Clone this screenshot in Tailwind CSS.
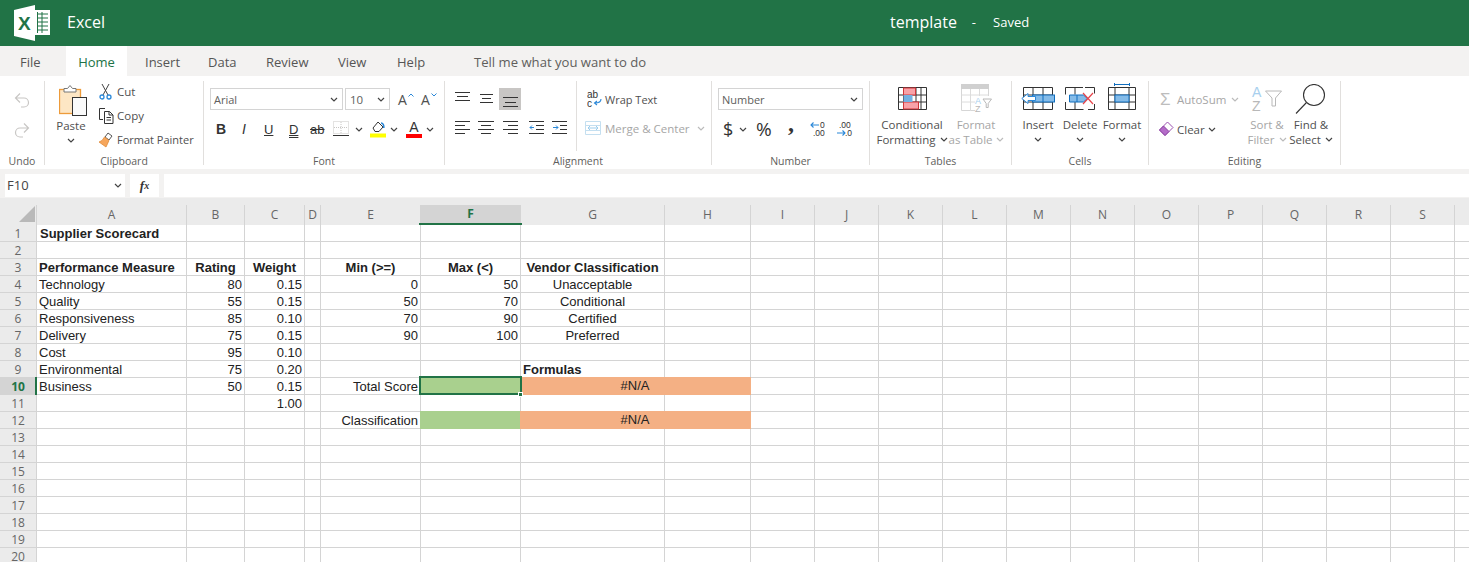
<!DOCTYPE html>
<html lang="en">
<head>
<meta charset="utf-8">
<title>Excel - template</title>
<script src="https://cdn.jsdelivr.net/npm/@tailwindcss/browser@4"></script>
</head>
<body class="w-[1469px] h-[562px] overflow-hidden bg-white font-['Open_Sans',sans-serif] text-[#444]">

<!-- Title bar -->
<header class="h-[46px] bg-[#217346] text-white flex items-center relative">
  <svg class="ml-[13px] w-[38px] h-[38px] shrink-0" viewBox="0 0 38 38">
    <polygon points="1,6 22,1 22,37 1,32" fill="#fff"/>
    <text x="5" y="26" font-family="Liberation Sans" font-weight="700" font-size="19" fill="#217346">X</text>
    <rect x="22" y="6" width="15" height="25" fill="#fff"/>
    <path d="M24 10h11M24 14h11M24 18h11M24 22h11M24 26h11M29 8v21M24.500 8v21" stroke="#217346" stroke-width="1" fill="none"/>
  </svg>
  <span class="ml-[16px] text-[16px] mb-[2px]">Excel</span>
  <div class="ml-[785px] flex items-center">
    <span class="text-[16px] mb-[2px]">template</span>
    <span class="ml-[15px] text-[13px]">-</span>
    <span class="ml-[17px] text-[13px]">Saved</span>
  </div>
</header>

<!-- Tabs -->
<nav class="h-[30px] bg-[#f3f2f1] flex items-center text-[13px] text-[#555]">
  <span class="w-[66px] pl-[20px] pt-[3px]">File</span>
  <span class="w-[61px] h-full bg-white text-[#217346] pt-[3px] flex items-center justify-center">Home</span>
  <span class="w-[81px] pl-[18px] pt-[3px]">Insert</span>
  <span class="w-[58px] pt-[3px]">Data</span>
  <span class="w-[72px] pt-[3px]">Review</span>
  <span class="w-[59px] pt-[3px]">View</span>
  <span class="w-[77px] pt-[3px]">Help</span>
  <span class="pt-[3px] text-[13.100px] text-[#605e5c]">Tell me what you want to do</span>
</nav>

<!-- Ribbon -->
<section class="h-[93px] pt-[5px] bg-white flex text-[11.500px] leading-[15px] text-[#505050]">

  <!-- Undo -->
  <div class="w-[45px] h-[84px] border-r border-[#e1dfdd] flex flex-col">
    <div class="h-[72px] flex flex-col items-center pt-[11px] gap-[14px]">
      <svg class="w-[16px] h-[16px]" viewBox="0 0 16 16" fill="none" stroke="#c8c6c4" stroke-width="1.200"><path d="M6 1.500L1.500 6 6 10.500M1.500 6H10a4.500 4.500 0 0 1 0 9H7"/></svg>
      <svg class="w-[16px] h-[16px]" viewBox="0 0 16 16" fill="none" stroke="#c8c6c4" stroke-width="1.200"><path d="M10 1.500L14.500 6 10 10.500M14.500 6H6a4.500 4.500 0 0 0 0 9h3"/></svg>
    </div>
    <div class="h-[12px] leading-[16px] text-center text-[10.500px] text-[#605e5c]">Undo</div>
  </div>

  <!-- Clipboard -->
  <div class="w-[159px] h-[84px] border-r border-[#e1dfdd] flex flex-col">
    <div class="h-[72px] flex">
      <div class="ml-[6px] w-[40px] flex flex-col items-center">
        <svg class="mt-[3px] w-[28px] h-[32px] ml-[4px]" viewBox="0 0 28 32">
          <rect x=".500" y="5.500" width="21" height="24" fill="#fde6c4" stroke="#ed9b3a" stroke-width="1.300"/>
          <path d="M5 8V4.500h3.500L11 1.500l2.500 3H17V8z" fill="#fff" stroke="#777"/>
          <rect x="13.500" y="13.500" width="14" height="18" fill="#fafafa" stroke="#333"/>
        </svg>
        <span class="mt-[2px]">Paste</span>
        <svg class="mt-[5px] w-[8px] h-[5px]" viewBox="0 0 8 5" fill="none" stroke="#444" stroke-width="1.200"><path d="M1 1l3 3 3-3"/></svg>
      </div>
      <div class="ml-[7px] flex flex-col pt-[2px]">
        <div class="h-[17px] flex items-center">
          <svg class="w-[16px] h-[17px]" viewBox="0 0 16 17" fill="none"><path d="M4 1l6 11M11 1L5 12" stroke="#444"/><circle cx="4" cy="14" r="2" stroke="#2b88d8" stroke-width="1.300"/><circle cx="11" cy="14" r="2" stroke="#2b88d8" stroke-width="1.300"/></svg>
          <span class="ml-[3px]">Cut</span>
        </div>
        <div class="h-[17px] mt-[7px] flex items-center">
          <svg class="w-[18px] h-[16px]" viewBox="0 0 18 16" fill="none" stroke="#333"><path d="M7 .500H1.500v11H5"/><path d="M6.500 3.500h5l3.500 3.500v8.500H6.500zM11 3.500V7h4M8.500 9.500h4.500M8.500 12h4.500"/></svg>
          <span class="ml-[1px]">Copy</span>
        </div>
        <div class="h-[17px] mt-[7px] flex items-center">
          <svg class="w-[16px] h-[16px]" viewBox="0 0 16 16"><path d="M10 1l4 3-3 4-4-3z" fill="#fff" stroke="#555"/><path d="M6.500 5l4.500 3.500-3 6.500-7-5 3-1.500z" fill="#f6a65c" stroke="#e08b3a" stroke-width=".800"/></svg>
          <span class="ml-[3px] text-[11px] whitespace-nowrap">Format Painter</span>
        </div>
      </div>
    </div>
    <div class="h-[12px] leading-[16px] text-center text-[10.500px] text-[#605e5c]">Clipboard</div>
  </div>

  <!-- Font -->
  <div class="w-[241px] h-[84px] border-r border-[#e1dfdd] flex flex-col">
    <div class="h-[72px] pl-[6px] pt-[7px]">
      <div class="flex items-center h-[22px]">
        <div class="w-[133px] h-[22px] border border-[#d4d4d4] flex items-center justify-between pl-[3px] pr-[4px] text-[11px] text-[#605e5c]">
          <span>Arial</span>
          <svg class="w-[8px] h-[5px]" viewBox="0 0 8 5" fill="none" stroke="#444" stroke-width="1.200"><path d="M1 1l3 3 3-3"/></svg>
        </div>
        <div class="ml-[2px] w-[45px] h-[22px] border border-[#d4d4d4] flex items-center justify-between pl-[4px] pr-[4px] text-[#605e5c]">
          <span>10</span>
          <svg class="w-[8px] h-[5px]" viewBox="0 0 8 5" fill="none" stroke="#444" stroke-width="1.200"><path d="M1 1l3 3 3-3"/></svg>
        </div>
        <span class="ml-[8px] relative text-[14px] w-[23px]">A<svg class="absolute left-[10px] top-[1px] w-[6px] h-[4px]" viewBox="0 0 6 4" fill="none" stroke="#2b88d8"><path d="M.500 3.500L3 1l2.500 2.500"/></svg></span>
        <span class="relative text-[14px]">A<svg class="absolute left-[10px] top-[1px] w-[6px] h-[4px]" viewBox="0 0 6 4" fill="none" stroke="#2b88d8"><path d="M.500.500L3 3l2.500-2.500"/></svg></span>
      </div>
      <div class="flex items-center h-[24px] mt-[7px] text-[#333]">
        <span class="ml-[6px] w-[22px] text-[14px] font-bold font-['Liberation_Sans']">B</span>
        <span class="ml-[4px] w-[22px] text-[14px] italic font-['Liberation_Sans']">I</span>
        <span class="w-[25px] text-[13px] underline font-['Liberation_Sans']">U</span>
        <span class="w-[21px] text-[13px] underline decoration-double font-['Liberation_Sans']">D</span>
        <span class="w-[23px] text-[13px] line-through font-['Liberation_Sans']">ab</span>
        <svg class="w-[16px] h-[16px]" viewBox="0 0 16 16" fill="none"><path d="M.500.500h15v12H.500zM8 1v11M1 6.500h14" stroke="#c8c6c4" stroke-dasharray="1 1"/><path d="M0 14.500h16" stroke="#333"/></svg>
        <svg class="ml-[6px] w-[8px] h-[5px]" viewBox="0 0 8 5" fill="none" stroke="#444" stroke-width="1.200"><path d="M1 1l3 3 3-3"/></svg>
        <svg class="ml-[7px] w-[16px] h-[18px]" viewBox="0 0 16 18"><path d="M3 8l5-6 5 5-4 4.500H5z" fill="#fff" stroke="#333"/><path d="M11 3c2 0 3 2 2.800 5" fill="none" stroke="#2b88d8" stroke-width="1.600"/><rect y="13.500" width="16" height="4" fill="#ffff00"/></svg>
        <svg class="ml-[4px] w-[8px] h-[5px]" viewBox="0 0 8 5" fill="none" stroke="#444" stroke-width="1.200"><path d="M1 1l3 3 3-3"/></svg>
        <span class="ml-[8px] w-[16px] h-[18px] relative text-center text-[14px] leading-[15px] font-['Liberation_Sans']">A<span class="absolute left-0 bottom-0 w-[16px] h-[4px] bg-[#ff0000]"></span></span>
        <svg class="ml-[4px] w-[8px] h-[5px]" viewBox="0 0 8 5" fill="none" stroke="#444" stroke-width="1.200"><path d="M1 1l3 3 3-3"/></svg>
      </div>
    </div>
    <div class="h-[12px] leading-[16px] text-center text-[10.500px] text-[#605e5c]">Font</div>
  </div>

  <!-- Alignment -->
  <div class="w-[267px] h-[84px] border-r border-[#e1dfdd] flex flex-col">
    <div class="h-[70px] flex">
      <div class="w-[132px] border-r border-[#e1dfdd] pt-[7px] pl-[10px]">
        <div class="flex items-center h-[22px] text-[#333]">
          <svg class="w-[15px] h-[22px]" viewBox="0 0 15 22" stroke="#333" fill="none"><path d="M0 4.500h15M2 8.500h11M0 12.500h15"/></svg>
          <svg class="ml-[9px] w-[15px] h-[22px]" viewBox="0 0 15 22" stroke="#333" fill="none"><path d="M1 6.500h13M3 10.500h9M1 14.500h13"/></svg>
          <span class="ml-[5px] w-[22px] h-[22px] bg-[#c8c6c4] flex items-center justify-center">
            <svg class="w-[15px] h-[22px]" viewBox="0 0 15 22" stroke="#333" fill="none"><path d="M0 9.500h15M2 14.500h11M0 18.500h15"/></svg>
          </span>
        </div>
        <div class="flex items-center h-[14px] mt-[11px]">
          <svg class="w-[15px] h-[14px]" viewBox="0 0 15 14" stroke="#333" fill="none"><path d="M0 .500h15M0 4.500h10M0 8.500h15M0 12.500h10"/></svg>
          <svg class="ml-[8px] w-[16px] h-[14px]" viewBox="0 0 16 14" stroke="#333" fill="none"><path d="M0 .500h16M3 4.500h10M0 8.500h16M3 12.500h10"/></svg>
          <svg class="ml-[9px] w-[15px] h-[14px]" viewBox="0 0 15 14" stroke="#333" fill="none"><path d="M0 .500h15M5 4.500h10M0 8.500h15M5 12.500h10"/></svg>
          <svg class="ml-[11px] w-[15px] h-[14px]" viewBox="0 0 15 14" fill="none"><path d="M0 .500h15M7 4.500h8M7 8.500h8M0 12.500h15" stroke="#333"/><path d="M5 6.500H1M3 4.500l-2 2 2 2" stroke="#2b88d8"/></svg>
          <svg class="ml-[8px] w-[15px] h-[14px]" viewBox="0 0 15 14" fill="none"><path d="M0 .500h15M8 4.500h7M8 8.500h7M0 12.500h15" stroke="#333"/><path d="M1 6.500h5M4 4.500l2 2-2 2" stroke="#2b88d8"/></svg>
        </div>
      </div>
      <div class="pl-[8px] pt-[8px]">
        <div class="flex items-center h-[20px]">
          <svg class="w-[16px] h-[20px] ml-[2px]" viewBox="0 0 16 20"><text x="0" y="9" font-family="Liberation Sans" font-size="10" fill="#333">ab</text><text x="0" y="18" font-family="Liberation Sans" font-size="10" fill="#333">c</text><path d="M14 10c0 3-2 4-6 4M10 12l-2.500 2 2.500 2" fill="none" stroke="#2b88d8" stroke-width="1.100"/></svg>
          <span class="ml-[2px] text-[11px]">Wrap Text</span>
        </div>
        <div class="flex items-center h-[20px] mt-[9px] text-[#a6a6a6]">
          <svg class="w-[16px] h-[16px]" viewBox="0 0 16 16" fill="none"><path d="M.500 1.500h15v13H.500zM.500 5.500h15M.500 10.500h15" stroke="#c4dff0"/><path d="M3 8h10M5 6L3 8l2 2M11 6l2 2-2 2" stroke="#9dcdec"/></svg>
          <span class="ml-[4px] whitespace-nowrap">Merge &amp; Center</span>
          <svg class="ml-[7px] w-[8px] h-[5px]" viewBox="0 0 8 5" fill="none" stroke="#bbb" stroke-width="1.200"><path d="M1 1l3 3 3-3"/></svg>
        </div>
      </div>
    </div>
    <div class="mt-[2px] h-[12px] leading-[16px] text-center text-[10.500px] text-[#605e5c]">Alignment</div>
  </div>

  <!-- Number -->
  <div class="w-[158px] h-[84px] border-r border-[#e1dfdd] flex flex-col">
    <div class="h-[72px] pl-[6px] pt-[7px]">
      <div class="w-[145px] h-[22px] border border-[#d4d4d4] flex items-center justify-between pl-[3px] pr-[4px] text-[11px] text-[#605e5c]">
        <span>Number</span>
        <svg class="w-[8px] h-[5px]" viewBox="0 0 8 5" fill="none" stroke="#444" stroke-width="1.200"><path d="M1 1l3 3 3-3"/></svg>
      </div>
      <div class="flex items-center h-[24px] mt-[7px] text-[#333]">
        <span class="ml-[5px] w-[11px] text-[18px]">$</span>
        <svg class="ml-[5px] w-[8px] h-[5px]" viewBox="0 0 8 5" fill="none" stroke="#444" stroke-width="1.200"><path d="M1 1l3 3 3-3"/></svg>
        <span class="ml-[9px] w-[17px] text-[19px]">%</span>
        <span class="ml-[15px] w-[22px] h-[24px] text-[24px] leading-[12px] font-bold font-['Liberation_Serif']">,</span>
        <svg class="w-[17px] h-[16px]" viewBox="0 0 17 16"><text x="10" y="7" font-family="Liberation Sans" font-size="8.500" fill="#333">0</text><text x="3" y="15" font-family="Liberation Sans" font-size="8.500" fill="#333">.00</text><path d="M9 4H1M3.500 1.500L1 4l2.500 2.500" fill="none" stroke="#2b88d8" stroke-width="1.100"/></svg>
        <svg class="ml-[9px] w-[17px] h-[16px]" viewBox="0 0 17 16"><text x="3" y="7" font-family="Liberation Sans" font-size="8.500" fill="#333">.00</text><text x="9" y="15" font-family="Liberation Sans" font-size="8.500" fill="#333">.0</text><path d="M1 12h8M6.500 9.500L9 12l-2.500 2.500" fill="none" stroke="#2b88d8" stroke-width="1.100"/></svg>
      </div>
    </div>
    <div class="h-[12px] leading-[16px] text-center text-[10.500px] text-[#605e5c]">Number</div>
  </div>

  <!-- Tables -->
  <div class="w-[142px] h-[84px] border-r border-[#e1dfdd] flex flex-col">
    <div class="h-[72px] flex pl-[5px]">
      <div class="w-[74px] flex flex-col items-center">
        <svg class="mt-[6px] w-[29px] h-[23px]" viewBox="0 0 29 23">
          <path d="M.500.500h28v22H.500zM.500 8h28M.500 15h28M5.500.500v22M18 .500v22M23 .500v22" fill="none" stroke="#333"/>
          <rect x="5.500" y="1" width="12" height="7" fill="#f8a2a8" stroke="#d13438"/>
          <rect x="5.500" y="15" width="15" height="7" fill="#f8a2a8" stroke="#d13438"/>
          <rect x="5.500" y="8" width="9" height="7" fill="#74b1e2"/>
        </svg>
        <div class="mt-[7px] text-center whitespace-nowrap">Conditional</div>
        <div class="text-center whitespace-nowrap flex items-center">Formatting<svg class="ml-[4px] w-[8px] h-[5px]" viewBox="0 0 8 5" fill="none" stroke="#444" stroke-width="1.200"><path d="M1 1l3 3 3-3"/></svg></div>
      </div>
      <div class="w-[54px] flex flex-col items-center text-[#a6a6a6]">
        <svg class="mt-[3px] w-[31px] h-[29px]" viewBox="0 0 31 29">
          <path d="M.500.500h27v26H.500z" fill="none" stroke="#d6d6d6"/>
          <rect x="0" y="0" width="28" height="5" fill="#d0d0d0"/>
          <path d="M.500 11h27M.500 18h27M9.500 5v22M18.500 5v22" stroke="#dcdcdc"/>
          <rect x="14" y="12" width="17" height="17" fill="#fff"/>
          <text x="14" y="20" font-family="Liberation Sans" font-size="9" fill="#a8cfee">A</text>
          <text x="14" y="28" font-family="Liberation Sans" font-size="9" fill="#b8b8b8">Z</text>
          <path d="M22 15h8.500l-3.300 4.500v4h-2v-4z" fill="#fff" stroke="#b8b8b8"/>
        </svg>
        <div class="mt-[4px] whitespace-nowrap">Format</div>
        <div class="whitespace-nowrap flex items-center">as Table<svg class="ml-[3px] w-[8px] h-[5px]" viewBox="0 0 8 5" fill="none" stroke="#bbb" stroke-width="1.200"><path d="M1 1l3 3 3-3"/></svg></div>
      </div>
    </div>
    <div class="h-[12px] leading-[16px] text-center text-[10.500px] text-[#605e5c]">Tables</div>
  </div>

  <!-- Cells -->
  <div class="w-[137px] h-[84px] border-r border-[#e1dfdd] flex flex-col">
    <div class="h-[72px] flex pl-[5px]">
      <div class="w-[42px] flex flex-col items-center">
        <svg class="mt-[6px] w-[34px] h-[23px]" viewBox="0 0 34 23">
          <path d="M2.500 .500h29v22h-29zM12 .500v22M22 .500v22M2.500 15h29M2.500 8h29" fill="none" stroke="#333"/>
          <rect x="11.500" y="8" width="22" height="7" fill="#84bbe8" stroke="#106ebe"/>
          <path d="M22 8v7" stroke="#106ebe"/>
          <path d="M14.500 9.500H7v-3L.800 11.500 7 16.500v-3h7.500z" fill="#fff" stroke="#2b88d8"/>
        </svg>
        <div class="mt-[7px]">Insert</div>
        <svg class="mt-[5px] w-[8px] h-[5px]" viewBox="0 0 8 5" fill="none" stroke="#444" stroke-width="1.200"><path d="M1 1l3 3 3-3"/></svg>
      </div>
      <div class="w-[42px] flex flex-col items-center">
        <svg class="mt-[6px] w-[30px] h-[23px]" viewBox="0 0 30 23">
          <path d="M18 .500H.500v7M.500 15v7.500h18M10 .500v7M10 15v7.500M20 .500h9.500v6M29.500 17v5.500H23" fill="none" stroke="#333"/>
          <path d="M4.500 8h14l4 3.500-4 3.500h-14z" fill="#84bbe8" stroke="#106ebe"/>
          <path d="M12 8v7" stroke="#106ebe"/>
          <path d="M18 6l10 11M28 6L18 17" stroke="#e8454b" stroke-width="1.200"/>
        </svg>
        <div class="mt-[7px]">Delete</div>
        <svg class="mt-[5px] w-[8px] h-[5px]" viewBox="0 0 8 5" fill="none" stroke="#444" stroke-width="1.200"><path d="M1 1l3 3 3-3"/></svg>
      </div>
      <div class="w-[42px] flex flex-col items-center">
        <svg class="mt-[1px] w-[28px] h-[28px]" viewBox="0 0 28 28">
          <path d="M6 2.500h16M6.500 1v3M21.500 1v3" stroke="#106ebe" fill="none"/>
          <path d="M.500 5.500h27v22H.500zM7 5.500v22M21 5.500v22M.500 13h27M.500 20h27" fill="none" stroke="#333"/>
          <rect x="7" y="13" width="14" height="7" fill="#84bbe8" stroke="#106ebe"/>
        </svg>
        <div class="mt-[7px]">Format</div>
        <svg class="mt-[5px] w-[8px] h-[5px]" viewBox="0 0 8 5" fill="none" stroke="#444" stroke-width="1.200"><path d="M1 1l3 3 3-3"/></svg>
      </div>
    </div>
    <div class="h-[12px] leading-[16px] text-center text-[10.500px] text-[#605e5c]">Cells</div>
  </div>

  <!-- Editing -->
  <div class="w-[192px] h-[84px] border-r border-[#e1dfdd] flex flex-col">
    <div class="h-[72px] flex">
      <div class="w-[96px] pl-[9px] pt-[8px]">
        <div class="h-[20px] flex items-center text-[#a6a6a6]">
          <span class="ml-[2px] w-[17px] text-[17px] font-['Liberation_Sans'] text-[#bdbdbd]">Σ</span>
          <span>AutoSum</span>
          <svg class="ml-[5px] w-[8px] h-[5px]" viewBox="0 0 8 5" fill="none" stroke="#bbb" stroke-width="1.200"><path d="M1 1l3 3 3-3"/></svg>
        </div>
        <div class="h-[20px] mt-[10px] flex items-center">
          <svg class="w-[16px] h-[16px]" viewBox="0 0 16 16"><path d="M9.500 1L15 6.500 7 14.500 1.500 9z" fill="#fff" stroke="#9a4fb0"/><path d="M5.500 5L11 10.500 7 14.500 1.500 9z" fill="#b46cc8" stroke="#8a3fa0"/></svg>
          <span class="ml-[3px]">Clear</span>
          <svg class="ml-[3px] w-[8px] h-[5px]" viewBox="0 0 8 5" fill="none" stroke="#444" stroke-width="1.200"><path d="M1 1l3 3 3-3"/></svg>
        </div>
      </div>
      <div class="w-[44px] flex flex-col items-center text-[#a6a6a6]">
        <svg class="mt-[3px] w-[32px] h-[29px]" viewBox="0 0 32 29">
          <text x="1" y="13" font-family="Liberation Sans" font-size="14" fill="#a8cfee">A</text>
          <text x="1" y="27" font-family="Liberation Sans" font-size="14" fill="#b8b8b8">Z</text>
          <path d="M14.500 7h16l-6 7v8h-3.500v-8z" fill="#fff" stroke="#b8b8b8"/>
        </svg>
        <div class="mt-[4px] whitespace-nowrap">Sort &amp;</div>
        <div class="whitespace-nowrap flex items-center">Filter<svg class="ml-[4px] w-[8px] h-[5px]" viewBox="0 0 8 5" fill="none" stroke="#bbb" stroke-width="1.200"><path d="M1 1l3 3 3-3"/></svg></div>
      </div>
      <div class="w-[44px] flex flex-col items-center">
        <svg class="mt-[3px] w-[32px] h-[32px]" viewBox="0 0 32 32" fill="none" stroke="#333" stroke-width="1.100"><circle cx="19" cy="11" r="10.500"/><path d="M11.500 18.500L1 29.500"/></svg>
        <div class="mt-[1px] whitespace-nowrap">Find &amp;</div>
        <div class="whitespace-nowrap flex items-center">Select<svg class="ml-[4px] w-[8px] h-[5px]" viewBox="0 0 8 5" fill="none" stroke="#444" stroke-width="1.200"><path d="M1 1l3 3 3-3"/></svg></div>
      </div>
    </div>
    <div class="h-[12px] leading-[16px] text-center text-[10.500px] text-[#605e5c]">Editing</div>
  </div>
</section>

<!-- Formula bar -->
<div class="h-[29px] bg-[#f3f2f1] flex pt-[5px] pb-[1px] pl-[5px]">
  <div class="w-[120px] h-[23px] bg-white flex items-center justify-between pl-[2px] pr-[3px] text-[13px] text-[#444]">
    <span>F10</span>
    <svg class="w-[8px] h-[5px]" viewBox="0 0 8 5" fill="none" stroke="#444" stroke-width="1.200"><path d="M1 1l3 3 3-3"/></svg>
  </div>
  <div class="ml-[5px] w-[29px] h-[23px] bg-white flex items-center justify-center font-['Liberation_Serif'] italic font-bold text-[13px] text-[#333]">f<span class="text-[10px]">x</span></div>
  <div class="ml-[5px] flex-1 h-[23px] bg-white"></div>
</div>

<!-- Sheet -->
<div class="h-[7px] bg-[#ebebeb]"></div>
<div class="grid grid-cols-[37px_150px_58px_60px_16px_100px_100px_144px_86px_repeat(12,64px)] h-[20px] bg-[#ebebeb] text-[12px] leading-[19px] text-center text-[#666] [&>div]:border-r [&>div]:border-[#d4d4d4]">
  <div class="relative"><svg class="absolute left-[19px] top-[1px] w-[16px] h-[16px]" viewBox="0 0 16 16"><polygon points="16,0 16,16 0,16" fill="#b9b9b9"/></svg></div>
  <div>A</div>
  <div>B</div>
  <div>C</div>
  <div>D</div>
  <div>E</div>
  <div class="h-[18px] leading-[17px] bg-[#d4d4d4] font-bold text-[#217346] relative">F<span class="absolute -left-[2px] -right-[2px] top-[18px] h-[2px] bg-[#217346]"></span></div>
  <div>G</div>
  <div>H</div>
  <div>I</div>
  <div>J</div>
  <div>K</div>
  <div>L</div>
  <div>M</div>
  <div>N</div>
  <div>O</div>
  <div>P</div>
  <div>Q</div>
  <div>R</div>
  <div>S</div>
  <div></div>
</div>
<div class="grid grid-cols-[37px_150px_58px_60px_16px_100px_100px_144px_86px_repeat(12,64px)] auto-rows-[17px] font-['Liberation_Sans',sans-serif] text-[13px] leading-[17px] text-[#222] whitespace-nowrap [&>div]:border-r [&>div]:border-b [&>div]:border-[#d4d4d4] [&>div]:px-[2px]">
  <!-- 1 --><div class="bg-[#ebebeb] text-center text-[12px] text-[#666] font-['Open_Sans']">1</div><div class="font-bold pl-[3px]!">Supplier Scorecard</div><div></div><div></div><div></div><div></div><div></div><div></div><div></div><div></div><div></div><div></div><div></div><div></div><div></div><div></div><div></div><div></div><div></div><div></div><div></div>
  <!-- 2 --><div class="bg-[#ebebeb] text-center text-[12px] text-[#666] font-['Open_Sans']">2</div><div></div><div></div><div></div><div></div><div></div><div></div><div></div><div></div><div></div><div></div><div></div><div></div><div></div><div></div><div></div><div></div><div></div><div></div><div></div><div></div>
  <!-- 3 --><div class="bg-[#ebebeb] text-center text-[12px] text-[#666] font-['Open_Sans']">3</div><div class="font-bold">Performance Measure</div><div class="font-bold text-center">Rating</div><div class="font-bold text-center">Weight</div><div></div><div class="font-bold text-center">Min (&gt;=)</div><div class="font-bold text-center">Max (&lt;)</div><div class="font-bold text-center">Vendor Classification</div><div></div><div></div><div></div><div></div><div></div><div></div><div></div><div></div><div></div><div></div><div></div><div></div><div></div>
  <!-- 4 --><div class="bg-[#ebebeb] text-center text-[12px] text-[#666] font-['Open_Sans']">4</div><div>Technology</div><div class="text-right">80</div><div class="text-right">0.15</div><div></div><div class="text-right">0</div><div class="text-right">50</div><div class="text-center">Unacceptable</div><div></div><div></div><div></div><div></div><div></div><div></div><div></div><div></div><div></div><div></div><div></div><div></div><div></div>
  <!-- 5 --><div class="bg-[#ebebeb] text-center text-[12px] text-[#666] font-['Open_Sans']">5</div><div>Quality</div><div class="text-right">55</div><div class="text-right">0.15</div><div></div><div class="text-right">50</div><div class="text-right">70</div><div class="text-center">Conditional</div><div></div><div></div><div></div><div></div><div></div><div></div><div></div><div></div><div></div><div></div><div></div><div></div><div></div>
  <!-- 6 --><div class="bg-[#ebebeb] text-center text-[12px] text-[#666] font-['Open_Sans']">6</div><div>Responsiveness</div><div class="text-right">85</div><div class="text-right">0.10</div><div></div><div class="text-right">70</div><div class="text-right">90</div><div class="text-center">Certified</div><div></div><div></div><div></div><div></div><div></div><div></div><div></div><div></div><div></div><div></div><div></div><div></div><div></div>
  <!-- 7 --><div class="bg-[#ebebeb] text-center text-[12px] text-[#666] font-['Open_Sans']">7</div><div>Delivery</div><div class="text-right">75</div><div class="text-right">0.15</div><div></div><div class="text-right">90</div><div class="text-right">100</div><div class="text-center">Preferred</div><div></div><div></div><div></div><div></div><div></div><div></div><div></div><div></div><div></div><div></div><div></div><div></div><div></div>
  <!-- 8 --><div class="bg-[#ebebeb] text-center text-[12px] text-[#666] font-['Open_Sans']">8</div><div>Cost</div><div class="text-right">95</div><div class="text-right">0.10</div><div></div><div></div><div></div><div></div><div></div><div></div><div></div><div></div><div></div><div></div><div></div><div></div><div></div><div></div><div></div><div></div><div></div>
  <!-- 9 --><div class="bg-[#ebebeb] text-center text-[12px] text-[#666] font-['Open_Sans']">9</div><div>Environmental</div><div class="text-right">75</div><div class="text-right">0.20</div><div></div><div></div><div></div><div class="font-bold">Formulas</div><div></div><div></div><div></div><div></div><div></div><div></div><div></div><div></div><div></div><div></div><div></div><div></div><div></div>
  <!-- 10 --><div class="bg-[#d4d4d4] text-center text-[12px] font-bold text-[#217346] font-['Open_Sans'] relative">10<span class="absolute right-[-1px] -top-[1px] w-[2px] h-[18px] bg-[#217346]"></span></div><div>Business</div><div class="text-right">50</div><div class="text-right">0.15</div><div></div><div class="text-right">Total Score</div><div class="relative -ml-[1px] -mt-[1px] h-[18px] bg-[#a9d08e] border-transparent!"><span class="absolute -left-[1px] -top-[1px] w-[103px] h-[19px] border-2 border-[#217346]"></span><span class="absolute -right-[3px] -bottom-[3px] w-[5px] h-[5px] bg-[#217346] border border-white"></span></div><div class="col-span-2 text-center -ml-[1px] -mt-[1px] h-[18px] leading-[18px] bg-[#f4b084] border-transparent!">#N/A</div><div></div><div></div><div></div><div></div><div></div><div></div><div></div><div></div><div></div><div></div><div></div><div></div>
  <!-- 11 --><div class="bg-[#ebebeb] text-center text-[12px] text-[#666] font-['Open_Sans']">11</div><div></div><div></div><div class="text-right">1.00</div><div></div><div></div><div></div><div></div><div></div><div></div><div></div><div></div><div></div><div></div><div></div><div></div><div></div><div></div><div></div><div></div><div></div>
  <!-- 12 --><div class="bg-[#ebebeb] text-center text-[12px] text-[#666] font-['Open_Sans']">12</div><div></div><div></div><div></div><div></div><div class="text-right">Classification</div><div class="-ml-[1px] -mt-[1px] h-[18px] bg-[#a9d08e] border-transparent!"></div><div class="col-span-2 text-center -ml-[1px] -mt-[1px] h-[18px] leading-[18px] bg-[#f4b084] border-transparent!">#N/A</div><div></div><div></div><div></div><div></div><div></div><div></div><div></div><div></div><div></div><div></div><div></div><div></div>
  <!-- 13 --><div class="bg-[#ebebeb] text-center text-[12px] text-[#666] font-['Open_Sans']">13</div><div></div><div></div><div></div><div></div><div></div><div></div><div></div><div></div><div></div><div></div><div></div><div></div><div></div><div></div><div></div><div></div><div></div><div></div><div></div><div></div>
  <!-- 14 --><div class="bg-[#ebebeb] text-center text-[12px] text-[#666] font-['Open_Sans']">14</div><div></div><div></div><div></div><div></div><div></div><div></div><div></div><div></div><div></div><div></div><div></div><div></div><div></div><div></div><div></div><div></div><div></div><div></div><div></div><div></div>
  <!-- 15 --><div class="bg-[#ebebeb] text-center text-[12px] text-[#666] font-['Open_Sans']">15</div><div></div><div></div><div></div><div></div><div></div><div></div><div></div><div></div><div></div><div></div><div></div><div></div><div></div><div></div><div></div><div></div><div></div><div></div><div></div><div></div>
  <!-- 16 --><div class="bg-[#ebebeb] text-center text-[12px] text-[#666] font-['Open_Sans']">16</div><div></div><div></div><div></div><div></div><div></div><div></div><div></div><div></div><div></div><div></div><div></div><div></div><div></div><div></div><div></div><div></div><div></div><div></div><div></div><div></div>
  <!-- 17 --><div class="bg-[#ebebeb] text-center text-[12px] text-[#666] font-['Open_Sans']">17</div><div></div><div></div><div></div><div></div><div></div><div></div><div></div><div></div><div></div><div></div><div></div><div></div><div></div><div></div><div></div><div></div><div></div><div></div><div></div><div></div>
  <!-- 18 --><div class="bg-[#ebebeb] text-center text-[12px] text-[#666] font-['Open_Sans']">18</div><div></div><div></div><div></div><div></div><div></div><div></div><div></div><div></div><div></div><div></div><div></div><div></div><div></div><div></div><div></div><div></div><div></div><div></div><div></div><div></div>
  <!-- 19 --><div class="bg-[#ebebeb] text-center text-[12px] text-[#666] font-['Open_Sans']">19</div><div></div><div></div><div></div><div></div><div></div><div></div><div></div><div></div><div></div><div></div><div></div><div></div><div></div><div></div><div></div><div></div><div></div><div></div><div></div><div></div>
  <!-- 20 --><div class="bg-[#ebebeb] text-center text-[12px] text-[#666] font-['Open_Sans']">20</div><div></div><div></div><div></div><div></div><div></div><div></div><div></div><div></div><div></div><div></div><div></div><div></div><div></div><div></div><div></div><div></div><div></div><div></div><div></div><div></div>
</div>
</body>
</html>
